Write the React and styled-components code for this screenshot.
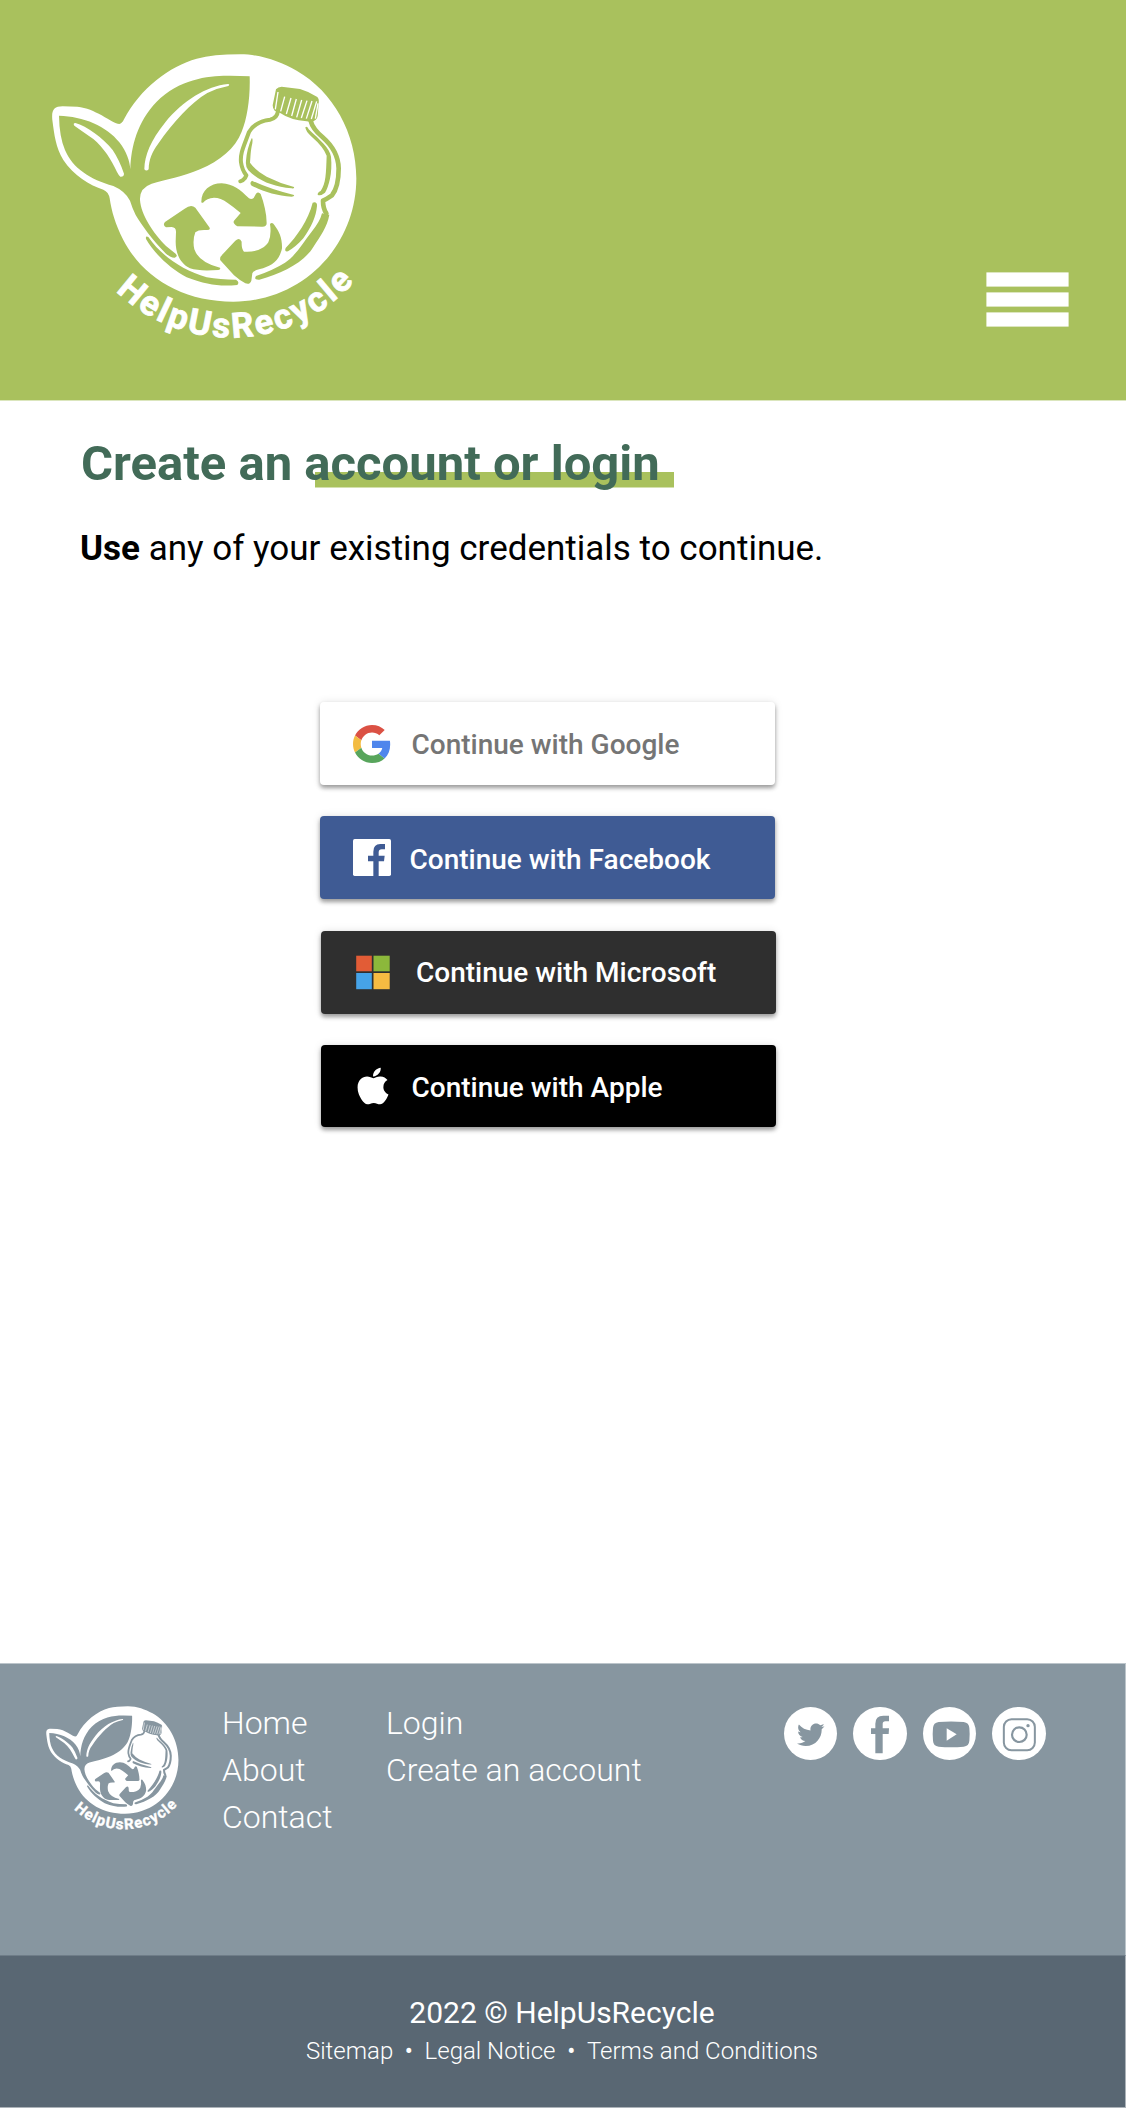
import React from 'react';
import styled, { createGlobalStyle } from 'styled-components';
import { FaApple, FaTwitter } from 'react-icons/fa';

const colors = {
  green: '#a9c15d',
  title: '#426b58',
  slate: '#8796a0',
  slateDark: '#596773',
};

const GlobalStyle = createGlobalStyle`
  * { box-sizing: border-box; }
  body {
    margin: 0;
    background: #fff;
    font-family: Roboto, 'Liberation Sans', sans-serif;
  }
  a { color: inherit; text-decoration: none; }
`;

const Page = styled.div`
  display: flex;
  flex-direction: column;
  width: 100%;
  height: 2108px;
`;

const Header = styled.header`
  display: flex;
  justify-content: space-between;
  align-items: flex-start;
  height: 401px;
  padding: 40px 57px 0 40px;
  background: ${colors.green};
  border-bottom: 1px solid #dbe6bd;
`;

const LogoSvg = styled.svg`
  display: block;
  flex: none;
  width: ${(p) => p.$width}px;
  height: ${(p) => (p.$width * 310) / 330}px;
  overflow: visible;
`;

const MenuButton = styled.button`
  display: block;
  margin: 232px 0 0;
  padding: 0;
  border: 0;
  background: none;
  line-height: 0;
`;

const Main = styled.main`
  display: flex;
  flex-direction: column;
  align-items: flex-start;
  height: 1262px;
  padding: 34px 0 0 80px;
`;

const Title = styled.h1`
  margin: 0;
  padding: 0 16px 0 1px;
  font-size: 49px;
  font-weight: 700;
  line-height: 58px;
  color: ${colors.title};
  background: linear-gradient(${colors.green}, ${colors.green}) 235px 37px / 359px 15.5px no-repeat;
`;

const Lead = styled.p`
  margin: 35px 0 0;
  font-size: 35px;
  line-height: 42px;
  color: #000;
`;

const Providers = styled.div`
  display: flex;
  flex-direction: column;
  gap: 31px;
  margin: 132px 0 0 240px;
`;

const ProviderButton = styled.button`
  display: flex;
  align-items: center;
  width: 455px;
  height: ${(p) => p.$height || 83}px;
  margin: ${(p) => p.$offset || '0'};
  padding: 0 0 0 33px;
  border: 0;
  border-radius: 4px;
  background: ${(p) => p.$bg};
  color: ${(p) => p.$color || '#fff'};
  box-shadow: 0 3px 4px rgba(0, 0, 0, 0.36), 0 0 8px rgba(0, 0, 0, 0.1);
  font-family: inherit;
  font-size: 28px;
  font-weight: 500;
  line-height: 34px;
  text-align: left;
`;

const ProviderIcon = styled.span`
  display: flex;
  flex: none;
  align-items: center;
  justify-content: center;
  width: 38px;
  height: 38px;
  svg { flex: none; }
`;

const ProviderLabel = styled.span`
  margin-left: ${(p) => p.$gap}px;
  padding-top: ${(p) => p.$drop || 0}px;
  white-space: nowrap;
`;

const Footer = styled.footer`
  display: flex;
  align-items: flex-start;
  height: 292px;
  padding: 36px 0 0 41.2px;
  background: ${colors.slate};
  border-top: 1px solid #bcc5cb;
  border-right: 1px solid #bcc5cb;
  color: #fff;
`;

const FooterLinks = styled.nav`
  display: flex;
  flex-direction: column;
  width: ${(p) => p.$width}px;
  margin-left: ${(p) => p.$gap || 0}px;
  font-size: 32px;
  font-weight: 300;
  line-height: 47px;
  white-space: nowrap;
`;

const Socials = styled.div`
  display: flex;
  gap: 15.8px;
  margin-top: 6.5px;
`;

const SocialLink = styled.a`
  display: flex;
  align-items: center;
  justify-content: center;
  width: 53.7px;
  height: 53.7px;
  border-radius: 50%;
  background: #fff;
  color: ${colors.slate};
`;

const TwitterIcon = styled(FaTwitter)`
  margin: 3px 0 0 1px;
`;

const BottomBar = styled.section`
  display: flex;
  flex-direction: column;
  align-items: center;
  flex: 1;
  padding: 39px 1px 0 0;
  background: ${colors.slateDark};
  border-top: 1px solid #6f7d88;
  border-right: 1px solid #acb3b9;
  border-bottom: 1px solid #acb3b9;
  color: #fff;
`;

const Copyright = styled.div`
  font-size: 30px;
  line-height: 36px;
`;

const LegalLinks = styled.nav`
  display: flex;
  align-items: center;
  margin-top: 5px;
  font-size: 24px;
  font-weight: 300;
  line-height: 30px;
`;

const Bullet = styled.span`
  width: 31.4px;
  font-weight: 400;
  text-align: center;
`;

const RIDGES = [
  [714, 156, 706, 208], [734, 170, 722, 214], [753, 174, 739, 222], [769, 177, 755, 228],
  [785, 180, 770, 232], [801, 182, 784, 234], [816, 183, 799, 236], [830, 184, 814, 237], [834, 190, 826, 236],
];

function Logo({ width, cut, id }) {
  return (
    <LogoSvg $width={width} viewBox="0 0 990 930" role="img" aria-label="HelpUsRecycle">
      <path
        fill="#fff"
        d="M37 240C34 210 42 199 68 199L112 200C140 203 162 213 185 226C212 242 226 252 238 252Q246 251 252 238C300 145 390 78 470 56Q520 43 600 43C665 43 720 65 770 92C880 155 949 280 949 415C949 620 785 785 580 785C430 785 310 715 250 600C225 550 215 515 209 475Q206 456 190 449C150 437 100 405 70 360C47 322 43 285 37 240Z"
      />
      <g fill={cut}>
        <path d="M57 227C130 229 200 258 238 307C260 336 269 362 271 388C273 320 292 245 350 185C420 115 510 106 570 107L629 109C631 170 622 235 605 275C586 325 540 362 480 388C430 410 375 420 335 431Q298 444 300 480C303 525 340 580 378 618L407 641Q415 650 404 653Q393 654 378 641C335 598 305 555 287 525Q276 502 270 482Q255 453 220 438C150 418 98 385 75 330Q58 290 57 227Z" />
        <path d="M325 591C362 645 425 690 500 712Q540 719 588 719Q600 726 592 735C540 740 500 735 440 712C390 685 342 640 318 597Q316 586 325 591Z" />
        <path d="M375 546L434 506Q453 492 466 503L508 562Q513 570 501 570Q475 568 466 577Q457 600 463 628Q477 668 540 683Q543 688 535 690C500 692 470 692 450 685C420 670 407 640 407 605L408 575Q408 562 395 561L378 562Q367 555 375 546Z" />
        <path d="M484 485C484 452 510 430 545 430C580 432 600 449 627 475Q634 480 641 474L648 461Q655 453 662 462C672 490 680 520 680 550Q680 561 665 560L592 559Q577 550 582 542L602 519Q580 500 562 488Q542 473 522 473Q500 475 489 488Q483 490 484 485Z" />
        <path d="M690 552Q697 545 703 555C718 575 727 595 726 625C718 665 690 680 660 687Q638 692 637 700L634 722Q630 735 616 730Q600 722 582 706L541 661Q538 652 548 643L586 602Q599 590 605 605Q604 628 612 635C640 637 670 630 685 607Q695 585 690 552Z" />
        <path d="M708 148Q714 140 725 140L780 147Q805 154 832 171Q838 177 836 190L833 228Q831 241 814 246L800 244Q750 240 722 220L704 212Q698 206 698 196Z" />
        <path d="M635 295Q639 292 637 310C631 335 632 350 630 368Q648 393 680 410Q720 430 762 441Q764 446 755 445C700 440 658 424 625 391Q616 382 618 362Q621 325 635 295Z" />
        <path d="M636 422Q690 448 762 465Q764 470 755 470C710 468 670 455 635 437Q627 429 636 422Z" />
        <path d="M796 262Q802 256 806 268C840 300 869 325 873 350C878 400 866 440 855 458Q840 470 833 464Q832 458 842 453C858 430 858 400 860 347Q850 320 815 290Q797 275 796 262Z" />
        <path d="M818 488Q832 484 831 498C828 530 815 560 790 595C775 612 760 625 744 634Q732 636 737 624C770 590 805 540 818 488Z" />
        <path d="M868 524C862 560 840 590 822 618C795 665 730 700 658 719Q640 720 648 708Q700 690 735 668C770 645 790 605 815 575Q840 545 846 520Z" />
      </g>
      <g fill="none" stroke={cut} strokeLinecap="round" strokeLinejoin="round">
        <path strokeWidth="12" d="M714 212Q712 235 690 239C660 242 642 252 627 276C611 320 600 340 603 367Q606 390 619 406L615 414Q609 422 601 424" />
        <path strokeWidth="14" d="M812 242Q817 265 848 292C880 320 895 350 896 385C896 420 889 450 876 466Q860 477 849 482Q849 505 859 520" />
      </g>
      <g fill="none" stroke="#fff" strokeWidth="4">
        {RIDGES.map(([x1, y1, x2, y2]) => (
          <line key={x1} x1={x1} y1={y1} x2={x2} y2={y2} />
        ))}
      </g>
      <g fill="#fff">
        <path d="M106 249C140 258 190 295 218 330Q238 360 252 401Q252 411 241 410Q236 406 231 396C215 360 190 322 160 297Q130 276 103 257Q98 250 106 249Z" />
        <path d="M564 132C500 138 428 182 376 247C332 302 314 345 313 388Q319 395 326 388C327 357 336 337 354 312C402 243 452 189 502 159Q532 144 565 138Q571 134 564 132Z" />
        <path id={id} fill="none" d="M79 400A493 493 0 0 0 1065 400" />
        <text fontFamily="Roboto, sans-serif" fontSize="104" fontWeight="700" letterSpacing="8" stroke="#fff" strokeWidth="2.5">
          <textPath href={`#${id}`} startOffset="393">HelpUsRecycle</textPath>
        </text>
      </g>
    </LogoSvg>
  );
}

const MenuIcon = () => (
  <svg width="83" height="55" viewBox="0 0 83 55" fill="#fff">
    <rect x="0.4" y="0.4" width="82.2" height="14.2" />
    <rect x="0.4" y="20.4" width="82.2" height="14.2" />
    <rect x="0.4" y="40.4" width="82.2" height="14.2" />
  </svg>
);

const GoogleIcon = () => (
  <svg width="38" height="38" viewBox="0 0 48 48">
    <path fill="#db5144" d="M24 9.5c3.54 0 6.71 1.22 9.21 3.6l6.85-6.85C35.9 2.38 30.47 0 24 0 14.62 0 6.51 5.38 2.56 13.22l7.98 6.19C12.43 13.72 17.74 9.5 24 9.5z" />
    <path fill="#4f86ec" d="M46.98 24.55c0-1.57-.15-3.09-.38-4.55H24v9.02h12.94c-.58 2.96-2.26 5.48-4.78 7.18l7.73 6c4.51-4.18 7.09-10.36 7.09-17.65z" />
    <path fill="#f3bc42" d="M10.53 28.59c-.48-1.45-.76-2.99-.76-4.59s.27-3.14.76-4.59l-7.98-6.19C.92 16.46 0 20.12 0 24c0 3.88.92 7.54 2.56 10.78l7.97-6.19z" />
    <path fill="#58a55c" d="M24 48c6.48 0 11.93-2.13 15.89-5.81l-7.73-6c-2.15 1.45-4.92 2.3-8.16 2.3-6.26 0-11.57-4.22-13.47-9.91l-7.98 6.19C6.51 42.62 14.62 48 24 48z" />
  </svg>
);

const FacebookSquareIcon = () => (
  <svg width="38" height="37" viewBox="0 0 114 111">
    <rect width="114" height="111" rx="5" fill="#fff" />
    <path fill="#3f5b94" d="M61 111V67H45V50H61V38Q61 15 82 15H96V31H86Q77 31 77 40V50H95L93 67H77V111Z" />
  </svg>
);

const MicrosoftIcon = () => (
  <svg width="37" height="35" viewBox="0 0 37 35">
    <rect x="1.2" y="0.7" width="15.6" height="15.6" fill="#e25c36" />
    <rect x="18.5" y="0.7" width="16.2" height="15.6" fill="#8cb83b" />
    <rect x="1.2" y="18" width="15.6" height="16.2" fill="#46a3e8" />
    <rect x="18.5" y="18" width="16.2" height="16.2" fill="#f6bb42" />
  </svg>
);

const FacebookIcon = () => (
  <svg width="53.7" height="53.7" viewBox="279 50 161 161">
    <path fill="currentColor" d="M346 189V131H333V114H346V100Q346 76 370 76H387V93H376Q368 93 368 101V114H387L386 131H368V189Z" />
  </svg>
);

const YoutubeIcon = () => (
  <svg width="53.7" height="53.7" viewBox="487 50 161 161">
    <path fill="currentColor" d="M534 95Q571 92 609 95Q625 97 626 113Q628 132 626 151Q625 167 609 169Q571 172 534 169Q518 167 517 151Q515 132 517 113Q518 97 534 95Z" />
    <path fill="#fff" d="M558 114L588 132L558 151Z" />
  </svg>
);

const InstagramIcon = () => (
  <svg width="53.7" height="53.7" viewBox="696 50 161 161" fill="none" stroke="currentColor">
    <rect x="731.5" y="86.5" width="93" height="93" rx="23" strokeWidth="6" />
    <circle cx="778" cy="133" r="22" strokeWidth="6.5" />
    <circle cx="804" cy="106" r="5" fill="currentColor" stroke="none" />
  </svg>
);

export default function App() {
  return (
    <Page>
      <GlobalStyle />
      <Header>
        <Logo width={330} cut={colors.green} id="header-arc" />
        <MenuButton aria-label="Menu">
          <MenuIcon />
        </MenuButton>
      </Header>

      <Main>
        <Title>Create an account or login</Title>
        <Lead>
          <b>Use</b> any of your existing credentials to continue.
        </Lead>
        <Providers>
          <ProviderButton $bg="#fff" $color="#757575">
            <ProviderIcon><GoogleIcon /></ProviderIcon>
            <ProviderLabel $gap={20.5} $drop={2}>Continue with Google</ProviderLabel>
          </ProviderButton>
          <ProviderButton $bg="#3f5b94">
            <ProviderIcon><FacebookSquareIcon /></ProviderIcon>
            <ProviderLabel $gap={18.5} $drop={4}>Continue with Facebook</ProviderLabel>
          </ProviderButton>
          <ProviderButton $bg="#2f2f2f" $offset="1px 0 0 1px">
            <ProviderIcon><MicrosoftIcon /></ProviderIcon>
            <ProviderLabel $gap={24}>Continue with Microsoft</ProviderLabel>
          </ProviderButton>
          <ProviderButton $bg="#000" $height={82} $offset="0 0 0 1px">
            <ProviderIcon><FaApple size={42} /></ProviderIcon>
            <ProviderLabel $gap={19.5} $drop={3}>Continue with Apple</ProviderLabel>
          </ProviderButton>
        </Providers>
      </Main>

      <Footer>
        <Logo width={143.4} cut={colors.slate} id="footer-arc" />
        <FooterLinks $width={164} $gap={37.4}>
          <a href="#home">Home</a>
          <a href="#about">About</a>
          <a href="#contact">Contact</a>
        </FooterLinks>
        <FooterLinks $width={397.7}>
          <a href="#login">Login</a>
          <a href="#create">Create an account</a>
        </FooterLinks>
        <Socials>
          <SocialLink href="#twitter" aria-label="Twitter"><TwitterIcon size={27.5} /></SocialLink>
          <SocialLink href="#facebook" aria-label="Facebook"><FacebookIcon /></SocialLink>
          <SocialLink href="#youtube" aria-label="YouTube"><YoutubeIcon /></SocialLink>
          <SocialLink href="#instagram" aria-label="Instagram"><InstagramIcon /></SocialLink>
        </Socials>
      </Footer>

      <BottomBar>
        <Copyright>2022 © HelpUsRecycle</Copyright>
        <LegalLinks>
          <a href="#sitemap">Sitemap</a>
          <Bullet>•</Bullet>
          <a href="#legal">Legal Notice</a>
          <Bullet>•</Bullet>
          <a href="#terms">Terms and Conditions</a>
        </LegalLinks>
      </BottomBar>
    </Page>
  );
}
